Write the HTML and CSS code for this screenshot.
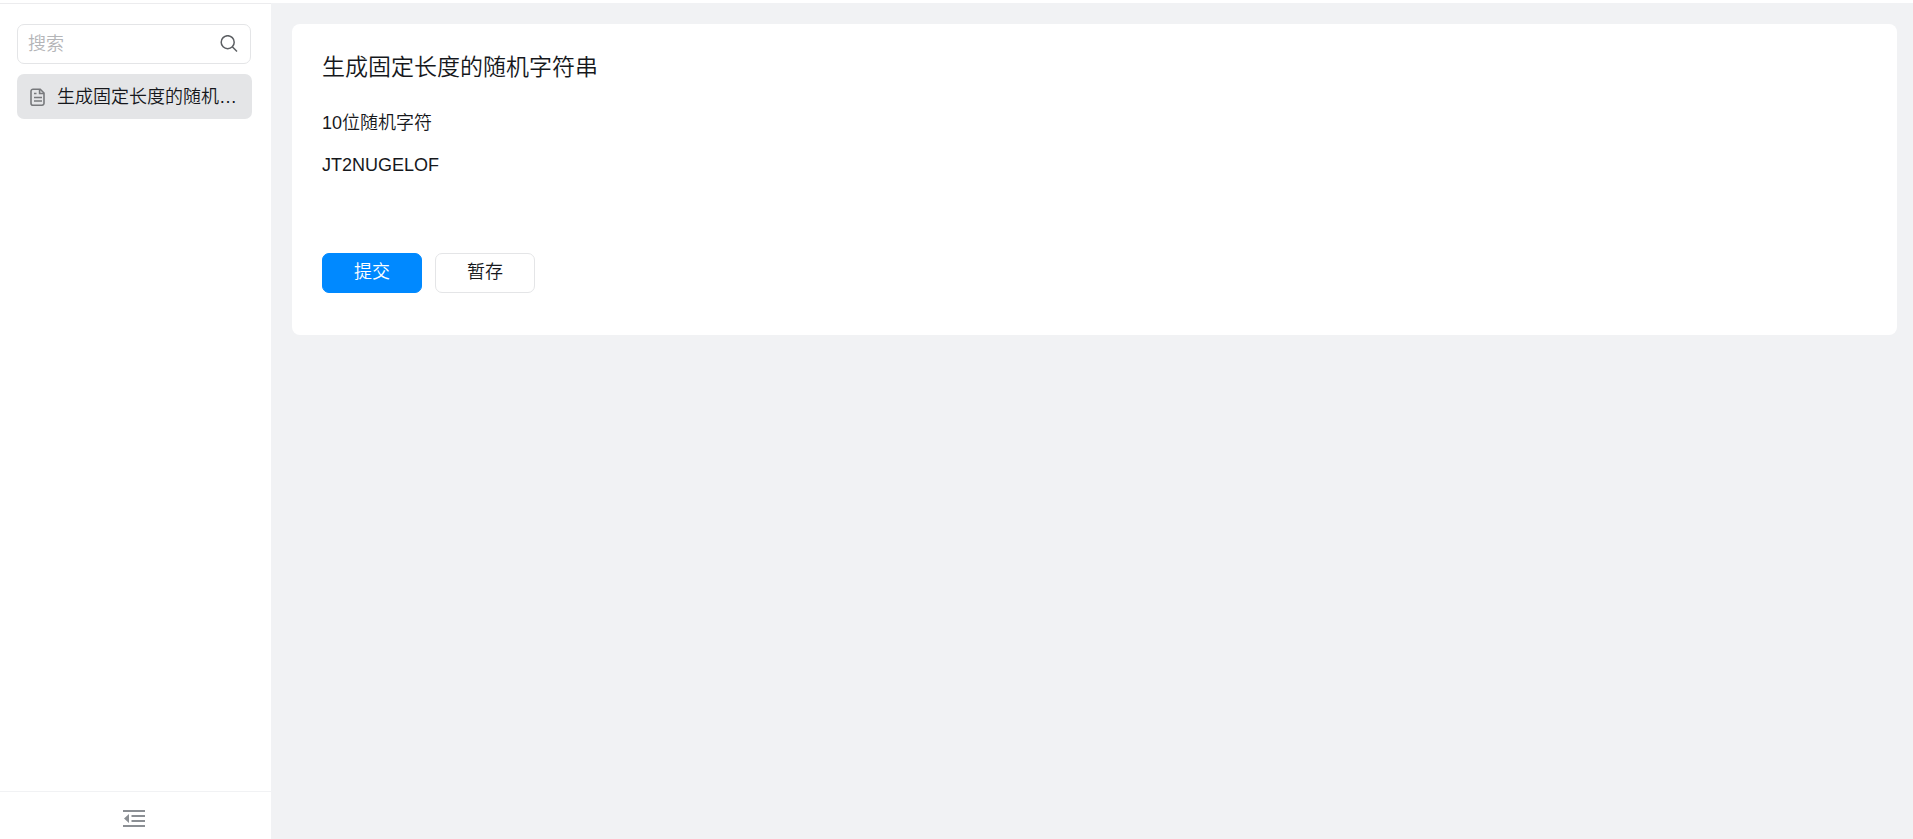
FILE: index.html
```html
<!DOCTYPE html>
<html lang="zh-CN">
<head>
<meta charset="utf-8">
<title>生成固定长度的随机字符串</title>
<link rel="stylesheet" href="styles.css">
</head>
<body>
<div class="app">
  <aside class="sidebar">
    <div class="sidebar-body">
      <label class="search">
        <input class="search-input" type="text" placeholder="搜索" aria-label="搜索">
        <svg class="search-icon" viewBox="0 0 18 18" aria-hidden="true"><circle cx="7.700" cy="7.200" r="6.500"/><path d="M12.300 11.800 17 16.500"/></svg>
      </label>
      <nav>
        <a class="nav-item" href="#">
          <svg class="doc-icon" viewBox="0 0 16 18" aria-hidden="true"><path d="M3 1.200h7.200L14 5v10.200a2 2 0 0 1-2 2H3a2 2 0 0 1-2-2v-12a2 2 0 0 1 2-2z"/><path d="M9.600 1.500v4H14M4 5.500h2.500M4 9.500h8M4 13h8"/></svg>
          <span class="nav-text">生成固定长度的随机字符串</span>
        </a>
      </nav>
    </div>
    <div class="sidebar-footer">
      <button class="collapse" type="button" aria-label="收起">
        <svg class="collapse-icon" viewBox="0 0 22 18" aria-hidden="true"><path d="M0 0h22v2H0zM8.500 5H22v2H8.500zM8.500 10H22v2H8.500zM0 15h22v2H0zM1 8.500 6 4v9z"/></svg>
      </button>
    </div>
  </aside>
  <main class="content">
    <section class="card">
      <h1 class="title">生成固定长度的随机字符串</h1>
      <div class="field">
        <div class="field-label">10位随机字符</div>
        <div class="field-value">JT2NUGELOF</div>
      </div>
      <div class="actions">
        <button class="btn btn-primary" type="button">提交</button>
        <button class="btn" type="button">暂存</button>
      </div>
    </section>
  </main>
</div>
</body>
</html>
```
FILE: styles.css
```css
* { box-sizing: border-box; }
body {
  margin: 0;
  color: #16181c;
  background: #fff;
  font: 350 18px/24px "Liberation Sans", "Noto Sans CJK SC", sans-serif;
}
button, input { font: inherit; color: inherit; }
.app {
  display: flex;
  height: 100vh;
  padding-top: 3px;
}
.sidebar {
  display: flex;
  flex: none;
  flex-direction: column;
  width: 271px;
  border-top: 1px solid #ececee;
  background: #fff;
}
.sidebar-body {
  flex: 1;
  padding: 20px 19px 0 17px;
}
.search {
  display: flex;
  align-items: center;
  height: 40px;
  margin-right: 1px;
  padding: 0 12px 0 10px;
  border: 1px solid #e4e5e7;
  border-radius: 7px;
}
.search-input {
  flex: 1;
  min-width: 0;
  padding: 0;
  border: 0;
  outline: 0;
  background: none;
}
.search-input::placeholder { color: #b4b5b8; opacity: 1; }
.search-icon {
  flex: none;
  width: 18px;
  height: 18px;
  fill: none;
  stroke: #5c5f63;
  stroke-width: 1.5;
}
.nav-item {
  display: flex;
  align-items: center;
  gap: 11px;
  height: 45px;
  margin-top: 10px;
  padding: 0 15px 0 13px;
  border-radius: 7px;
  background: #e4e5e7;
  color: inherit;
  text-decoration: none;
}
.doc-icon {
  flex: none;
  width: 16px;
  height: 18px;
  overflow: visible;
  fill: none;
  stroke: #77797c;
  stroke-width: 1.6;
}
.nav-text {
  flex: 1;
  min-width: 0;
  overflow: hidden;
  white-space: nowrap;
  text-overflow: ellipsis;
}
.sidebar-footer {
  display: flex;
  justify-content: center;
  height: 48px;
  padding-right: 3px;
  border-top: 1px solid #f1f2f4;
}
.collapse {
  display: flex;
  align-items: center;
  padding: 6px 0 0;
  border: 0;
  background: none;
}
.collapse-icon {
  width: 22px;
  height: 18px;
  fill: #8b8f94;
}
.content {
  flex: 1;
  min-width: 0;
  padding: 21px 16px 21px 21px;
  background: #f1f2f4;
}
.card {
  padding: 28px 30px 42px;
  border-radius: 8px;
  background: #fff;
}
.title {
  margin: 0;
  font-size: 23px;
  font-weight: inherit;
  line-height: 30px;
}
.field { margin-top: 29px; }
.field-value { margin-top: 18px; }
.actions {
  display: flex;
  gap: 13px;
  margin-top: 76px;
}
.btn {
  width: 100px;
  height: 40px;
  padding: 0 0 2px;
  border: 1px solid #e4e5e7;
  border-radius: 7px;
  background: #fff;
}
.btn-primary {
  border-color: #0089ff;
  background: #0089ff;
  color: #fff;
}
```
